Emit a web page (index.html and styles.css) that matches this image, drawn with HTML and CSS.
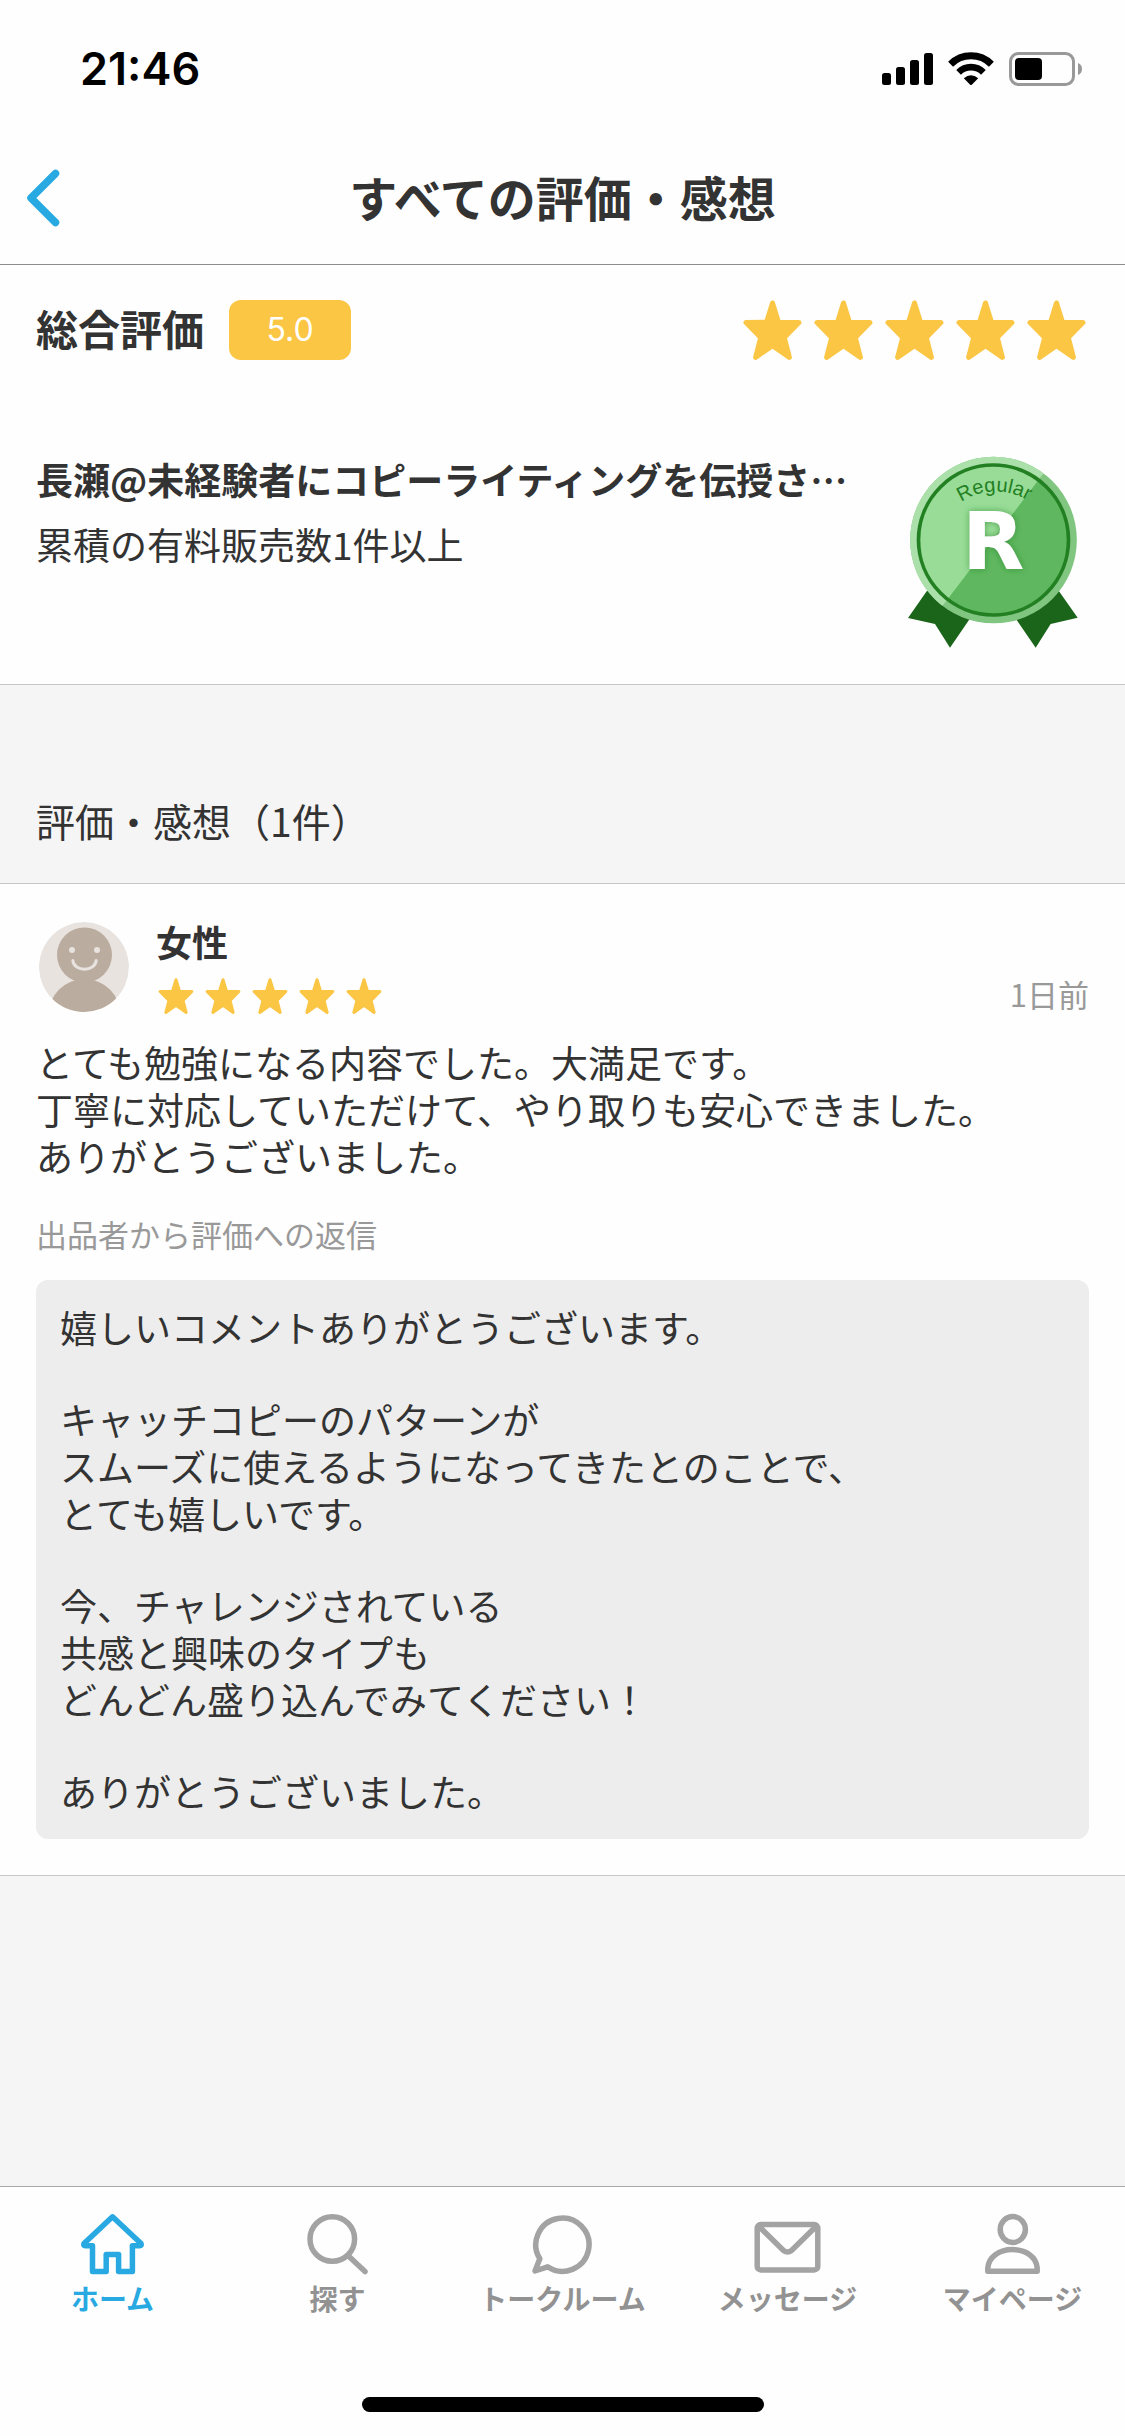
FILE: index.html
```html
<!DOCTYPE html>
<html lang="ja">
<head>
    <meta charset="UTF-8">
    <meta name="viewport" content="width=device-width, initial-scale=1.0">
    <title>すべての評価・感想</title>
    <link rel="stylesheet" href="styles.css">
</head>
<body>
    <!-- 共通アイコン -->
    <svg class="symbols" aria-hidden="true">
        <symbol id="star" viewBox="0 0 59 60">
            <path d="M29.5 3 L35.5 22.3 L56 22.6 L41.3 37.5 L46.4 57.4 L29.5 45.6 L12.6 57.4 L17.7 37.5 L3 22.6 L23.5 22.3 Z" fill="#fac644" stroke="#fac644" stroke-width="5" stroke-linejoin="round"/>
        </symbol>
    </svg>

    <div class="status-bar">
        <span class="status-time">21:46</span>
        <div class="status-icons">
            <svg width="51" height="34" viewBox="0 0 51 34" aria-hidden="true">
                <rect x="0" y="21" width="9" height="12" rx="2.5"/>
                <rect x="14" y="15" width="9" height="18" rx="2.5"/>
                <rect x="28" y="8" width="9" height="25" rx="2.5"/>
                <rect x="42" y="1" width="9" height="32" rx="2.5"/>
            </svg>
            <svg width="46" height="34" viewBox="0 0 46 34" aria-hidden="true">
                <path d="M2.6 12.2 A29 29 0 0 1 43.4 12.2" fill="none" stroke="#000" stroke-width="7"/>
                <path d="M10.6 20.3 A17.5 17.5 0 0 1 35.4 20.3" fill="none" stroke="#000" stroke-width="6.6"/>
                <path d="M15.8 26.2 Q23 20.4 30.2 26.2 L23.8 32.7 Q23 33.4 22.2 32.7 Z"/>
            </svg>
            <svg width="74" height="34" viewBox="0 0 74 34" aria-hidden="true">
                <rect x="1.5" y="1.5" width="63" height="31" rx="8" fill="none" stroke="#999" stroke-width="3"/>
                <rect x="6" y="6" width="27" height="22" rx="4"/>
                <path d="M69 11 Q73 12.5 73 17 Q73 21.5 69 23 Z" fill="#999"/>
            </svg>
        </div>
    </div>

    <header class="nav-bar">
        <button type="button" class="back-button" aria-label="戻る">
            <svg width="34" height="58" viewBox="0 0 34 58" aria-hidden="true">
                <path d="M29.5 4.5 L5 29 L29.5 53.5" fill="none" stroke="#29a9e2" stroke-width="7.5" stroke-linecap="round" stroke-linejoin="round"/>
            </svg>
        </button>
        <h1>すべての評価・感想</h1>
    </header>

    <main>
        <section class="summary">
            <div class="total">
                <h2>総合評価</h2>
                <span class="score">5.0</span>
                <div class="stars stars-large" role="img" aria-label="星5つ">
                    <svg><use href="#star"/></svg>
                    <svg><use href="#star"/></svg>
                    <svg><use href="#star"/></svg>
                    <svg><use href="#star"/></svg>
                    <svg><use href="#star"/></svg>
                </div>
            </div>
            <div class="seller">
                <div class="seller-text">
                    <p class="seller-name">長瀬@未経験者にコピーライティングを伝授さ…</p>
                    <p class="seller-rank">累積の有料販売数1件以上</p>
                </div>
                <svg class="medal" viewBox="140 75 546 585" role="img" aria-label="レギュラーランク">
                    <defs>
                        <path id="medal-arc" d="M303 216 A184 184 0 0 1 530 232"/>
                        <clipPath id="medal-light">
                            <path d="M100 40 H620 L548 132 L248 526 L100 700 Z"/>
                        </clipPath>
                        <filter id="medal-shadow" x="-30%" y="-30%" width="160%" height="160%">
                            <feDropShadow dx="0" dy="0" stdDeviation="9" flood-color="#1f7a1f" flood-opacity="0.6"/>
                        </filter>
                    </defs>
                    <path d="M200 482 L143 564 L224 582 L269 653 L328 567 Z" fill="#1b651b"/>
                    <path d="M595 482 L652 563 L571 582 L526 653 L467 567 Z" fill="#1b651b"/>
                    <circle cx="399.500" cy="330" r="250" fill="#80c580"/>
                    <circle cx="399.500" cy="330" r="250" fill="#abe0aa" clip-path="url(#medal-light)"/>
                    <circle cx="399.500" cy="330" r="225" fill="#5fb75f"/>
                    <circle cx="399.500" cy="330" r="225" fill="#98dc97" clip-path="url(#medal-light)"/>
                    <circle cx="399.500" cy="330" r="225" fill="none" stroke="#228022" stroke-width="11"/>
                    <text class="medal-label"><textPath href="#medal-arc">Regular</textPath></text>
                    <text class="medal-letter" x="399" y="418" text-anchor="middle" filter="url(#medal-shadow)">R</text>
                </svg>
            </div>
        </section>

        <h2 class="list-title">評価・感想（1件）</h2>

        <article class="review">
            <div class="review-head">
                <svg class="avatar" viewBox="-3 0 93 90" aria-hidden="true">
                    <clipPath id="avatar-clip"><circle cx="45" cy="45" r="45"/></clipPath>
                    <g clip-path="url(#avatar-clip)">
                        <circle cx="45" cy="45" r="45" fill="#e8e3df"/>
                        <circle cx="45.500" cy="33" r="27.500" fill="#bbaca0"/>
                        <ellipse cx="45.500" cy="93" rx="36" ry="36" fill="#bbaca0"/>
                    </g>
                    <circle cx="33" cy="28" r="3" fill="#e8e3df"/>
                    <circle cx="58" cy="28" r="3" fill="#e8e3df"/>
                    <path d="M33.800 38.500 C35 50 56 50 57.200 38.500" fill="none" stroke="#e8e3df" stroke-width="3" stroke-linecap="round"/>
                </svg>
                <div class="reviewer">
                    <h3>女性</h3>
                    <div class="stars stars-small" role="img" aria-label="星5つ">
                        <svg><use href="#star"/></svg>
                        <svg><use href="#star"/></svg>
                        <svg><use href="#star"/></svg>
                        <svg><use href="#star"/></svg>
                        <svg><use href="#star"/></svg>
                    </div>
                </div>
                <time class="review-time">1日前</time>
            </div>
            <p class="review-text">とても勉強になる内容でした。大満足です。<br>丁寧に対応していただけて、やり取りも安心できました。<br>ありがとうございました。</p>
            <p class="reply-label">出品者から評価への返信</p>
            <div class="reply">
                <p>嬉しいコメントありがとうございます。</p>
                <p>キャッチコピーのパターンが<br>スムーズに使えるようになってきたとのことで、<br>とても嬉しいです。</p>
                <p>今、チャレンジされている<br>共感と興味のタイプも<br>どんどん盛り込んでみてください！</p>
                <p>ありがとうございました。</p>
            </div>
        </article>
    </main>

    <footer class="tab-bar">
        <nav class="tabs">
            <a href="#" class="tab active">
                <svg viewBox="0 0 68 64" aria-hidden="true">
                    <path d="M33.500 4.800 L5 31.500 Q4 33.700 6 33.700 H13.500 V59.500 H27.200 V42.500 H39.600 V59.500 H53.400 V33.700 H61 Q63 33.700 62 31.500 Z"/>
                </svg>
                ホーム
            </a>
            <a href="#" class="tab">
                <svg viewBox="0 0 68 64" aria-hidden="true">
                    <circle cx="28.300" cy="27" r="22.300"/>
                    <path d="M44.500 44 L61 59.500"/>
                </svg>
                探す
            </a>
            <a href="#" class="tab">
                <svg viewBox="0 0 68 64" aria-hidden="true">
                    <path d="M10.800 46.700 A26.600 26.600 0 1 1 18.600 54.800 L6 59 Z"/>
                </svg>
                トークルーム
            </a>
            <a href="#" class="tab">
                <svg viewBox="0 0 68 64" aria-hidden="true">
                    <rect x="3.200" y="12.600" width="60.600" height="45.300" rx="3.500"/>
                    <path d="M5 14.500 L29.500 38.500 Q33.500 41.500 37.500 38.500 L62 14.500"/>
                </svg>
                メッセージ
            </a>
            <a href="#" class="tab">
                <svg viewBox="0 0 68 64" aria-hidden="true">
                    <ellipse cx="33.800" cy="17.500" rx="12.600" ry="12.900"/>
                    <path d="M8.800 59.300 V56 C9.500 45 20 37.600 33.500 37.600 S57.500 45 58.200 56 V59.300 Z"/>
                </svg>
                マイページ
            </a>
        </nav>
        <div class="home-indicator"></div>
    </footer>
</body>
</html>
```
FILE: styles.css
```css
body {
    margin: 0;
    min-height: 100vh;
    display: flex;
    flex-direction: column;
    background-color: #f5f5f5;
    color: #333333;
    font-family: "Noto Sans CJK JP", sans-serif;
    font-size: 37px;
    line-height: 47px;
}

h1, h2, h3, p {
    margin: 0;
}

svg {
    display: block;
    flex: none;
}

.symbols {
    position: absolute;
    width: 0;
    height: 0;
}

/* ステータスバー */
.status-bar {
    display: flex;
    justify-content: space-between;
    align-items: center;
    padding: 44px 42px 38px 80px;
    background-color: #fefefe;
}

.status-time {
    font-family: Inter, sans-serif;
    font-size: 45px;
    font-weight: 600;
    line-height: 50px;
    color: #000000;
}

.status-icons {
    display: flex;
    gap: 15px;
}

/* ヘッダー */
.nav-bar {
    display: grid;
    grid-template-columns: 1fr auto 1fr;
    align-items: center;
    padding: 34px 26px;
    border-bottom: 1px solid #8e8e8e;
    background-color: #fefefe;
}

.back-button {
    justify-self: start;
    padding: 0;
    border: none;
    background: none;
    cursor: pointer;
}

h1 {
    padding-bottom: 4px;
    font-size: 48px;
    line-height: 60px;
}

/* 総合評価 */
.summary {
    display: flex;
    flex-direction: column;
    gap: 95px;
    padding: 35px 36px 34px;
    border-bottom: 1px solid #c8c8c8;
    background-color: #fefefe;
}

.total {
    display: flex;
    align-items: center;
    gap: 25px;
}

.total h2 {
    padding-bottom: 4px;
    font-size: 42px;
    line-height: 56px;
}

.score {
    width: 122px;
    border-radius: 12px;
    background-color: #fac644;
    color: #ffffff;
    font-family: Inter, sans-serif;
    font-size: 32px;
    font-weight: 400;
    line-height: 60px;
    text-align: center;
}

.stars {
    display: flex;
}

.stars-large {
    gap: 12px;
    margin-left: auto;
    padding-right: 3px;
}

.stars-large svg {
    width: 59px;
    height: 60px;
}

.stars-small {
    gap: 11px;
    margin-top: 16px;
    padding-left: 2px;
}

.stars-small svg {
    width: 36px;
    height: 36px;
}

.seller {
    display: flex;
    justify-content: space-between;
}

.seller-text {
    display: flex;
    flex-direction: column;
    gap: 17px;
    line-height: 48px;
}

.seller-name {
    font-weight: 700;
}

.medal {
    width: 182px;
    height: 195px;
}

.medal-label {
    fill: #228022;
    font-family: "Liberation Sans", sans-serif;
    font-size: 60px;
}

.medal-letter {
    fill: #ffffff;
    font-family: "DejaVu Sans", sans-serif;
    font-size: 242px;
    font-weight: 700;
}

/* 評価一覧 */
.list-title {
    padding: 106px 36px 34px;
    border-bottom: 1px solid #c8c8c8;
    font-size: 39px;
    font-weight: 400;
    line-height: 58px;
}

.review {
    padding: 38px 36px 36px;
    border-bottom: 1px solid #c8c8c8;
    background-color: #fefefe;
}

.review-head {
    display: flex;
}

.avatar {
    width: 93px;
    height: 90px;
}

.reviewer {
    padding-left: 27px;
}

.reviewer h3 {
    padding-bottom: 2px;
    font-size: 36px;
    line-height: 38px;
}

.review-time {
    margin-left: auto;
    padding-bottom: 2px;
    align-self: flex-end;
    color: #999999;
    font-size: 31px;
    line-height: 36px;
}

.review-text {
    margin-top: 25px;
}

.reply-label {
    margin: 34px 0 26px;
    color: #999999;
    font-size: 31px;
    line-height: 40px;
}

.reply {
    display: flex;
    flex-direction: column;
    gap: 45px;
    padding: 24px;
    border-radius: 12px;
    background-color: #ededed;
}

/* タブバー */
.tab-bar {
    margin-top: auto;
    padding: 25px 0 24px;
    border-top: 1px solid #a8a8a8;
    background-color: #fefefe;
}

.tabs {
    display: grid;
    grid-template-columns: repeat(5, 1fr);
}

.tab {
    display: flex;
    flex-direction: column;
    align-items: center;
    gap: 4px;
    color: #929292;
    font-size: 28px;
    font-weight: 700;
    line-height: 36px;
    text-decoration: none;
}

.tab svg {
    width: 68px;
    height: 64px;
    fill: none;
    stroke: #a3a3a3;
    stroke-width: 5.5px;
    stroke-linecap: round;
    stroke-linejoin: round;
}

.tab.active {
    color: #29a9e2;
}

.tab.active svg {
    stroke: #29a9e2;
}

.home-indicator {
    width: 402px;
    height: 15px;
    margin: 81px auto 0;
    border-radius: 8px;
    background-color: #000000;
}
```
